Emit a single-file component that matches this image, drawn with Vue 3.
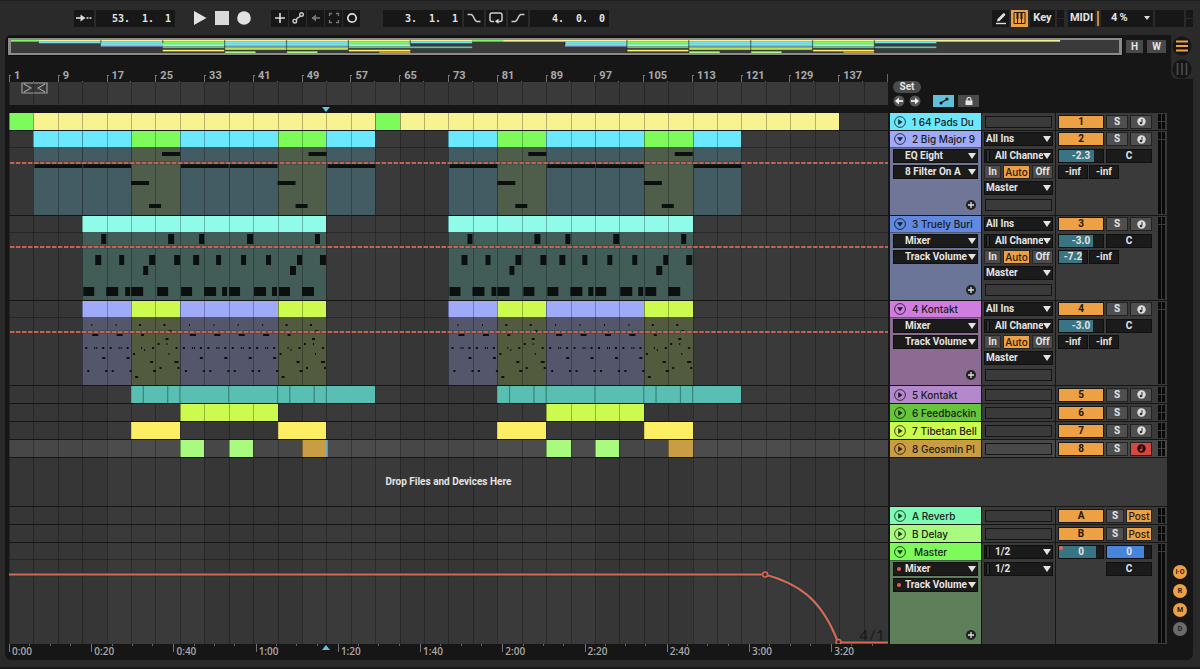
<script setup>
const UNITS = 36

const C = {
  cyan: ['#6be7fe', '#435b62'],
  green: ['#7cfb5b', '#4e5e4a'],
  yellow: ['#f8f391', '#5c5b40'],
  mint: ['#8ffbe8', '#425d57'],
  lav: ['#9fabf9', '#54566b'],
  lime: ['#ccfa4e', '#535b3f'],
  teal: ['#5abfb3', '#385852'],
  gold: ['#feee63', '#5c5b40'],
  pale: ['#a9fb80', '#4e5e4a'],
  brown: ['#c99d43', '#5c4b30']
}

const clips = (...list) => list.map(([from, to, c]) => ({ from, to, head: C[c][0], body: C[c][1], c }))

/* [row y, row height, [[x, width], ...]] measured from the start of the clip group */
const drums = [
  [2, 10, [[19, 5], [86, 6], [117, 5], [165, 6], [233, 5]]],
  [23, 10, [[13, 6], [37, 5], [67, 6], [92, 6], [111, 6], [134, 5], [159, 5], [184, 5], [215, 5], [238, 6]]],
  [34, 9, [[61, 5], [208, 6]]],
  [55, 9, [[1, 11], [24, 12], [43, 5], [49, 12], [75, 11], [99, 11], [122, 12], [140, 5], [147, 11], [172, 12], [190, 5], [197, 11], [220, 12]]]
]
const motifA = [[9, 7, 1], [10, 17, 6], [3, 30, 2], [12, 30, 1], [14, 30, 1], [20, 30, 2], [20, 40, 3], [5, 53, 2], [23, 53, 2]]
const motifB = [[8, 7, 2], [10, 17, 3], [10, 30, 1], [13, 32, 1], [21, 30, 2], [2, 36, 2], [19, 44, 3], [4, 59, 3], [22, 53, 3]]
const motifC = [[8, 7, 2], [13, 13, 3], [10, 21, 3], [2, 26, 2], [11, 26, 1], [20, 30, 2], [13, 36, 1], [19, 44, 4], [4, 50, 2], [22, 50, 2]]

const px = (u) => (u * 880) / UNITS

function drumNotes() {
  return [3, 18].flatMap((s) => drums.flatMap(([y, h, row]) => row.map(([x, w]) => ({ x: px(s) + x, y, w, h }))))
}
function padNotes() {
  const out = []
  for (const s of [1, 3, 7, 9, 13, 18, 22, 24, 28]) out.push({ x: px(s) + 1, y: 17, w: px(2) - 1, h: 4 })
  for (const s of [5, 11, 20, 26]) {
    out.push({ x: px(s), y: 34, w: 18, h: 4 })
    out.push({ x: px(s) + 18, y: 57, w: 12, h: 4 })
    out.push({ x: px(s) + 31, y: 5, w: 18, h: 4 })
  }
  return out
}
function dotNotes() {
  const out = []
  const add = (u, motif) => motif.forEach(([x, y, w]) => out.push({ x: px(u) + x, y, w, h: 2 }))
  for (const s of [3, 18]) {
    ;[0, 1, 4, 5, 6, 7].forEach((o) => add(s + o, motifA))
    ;[2, 8].forEach((o) => { add(s + o, motifB); add(s + o + 1, motifC) })
  }
  return out
}

const tracks = [
  { id: '1', name: '1 64 Pads Du', color: '#6be7fe', clips: clips([0, 1, 'green'], [1, 15, 'yellow'], [15, 16, 'green'], [16, 34, 'yellow']) },
  {
    id: '2', name: '2 Big Major 9', color: '#9fabf9', shade: '#6f7697', open: true, device: 'EQ Eight', param: '8 Filter On A', vol: '-2.3', volFill: 80, peak: '-inf', auto: 16,
    notes: padNotes(),
    clips: clips([1, 3, 'cyan'], [3, 5, 'cyan'], [5, 7, 'green'], [7, 9, 'cyan'], [9, 11, 'cyan'], [11, 13, 'green'], [13, 15, 'cyan'], [18, 20, 'cyan'], [20, 22, 'green'], [22, 24, 'cyan'], [24, 26, 'cyan'], [26, 28, 'green'], [28, 30, 'cyan'])
  },
  {
    id: '3', name: '3 Truely Buri', color: '#6189e0', shade: '#6a7598', open: true, device: 'Mixer', param: 'Track Volume', vol: '-3.0', volFill: 78, peak: '-7.2', peakFill: 82, auto: 15,
    notes: drumNotes(), clips: clips([3, 13, 'mint'], [18, 28, 'mint'])
  },
  {
    id: '4', name: '4 Kontakt', color: '#cf7ee0', shade: '#8c6b92', open: true, device: 'Mixer', param: 'Track Volume', vol: '-3.0', volFill: 78, peak: '-inf', auto: 15,
    notes: dotNotes(),
    clips: clips([3, 5, 'lav'], [5, 7, 'lime'], [7, 11, 'lav'], [11, 13, 'lime'], [18, 20, 'lav'], [20, 22, 'lime'], [22, 26, 'lav'], [26, 28, 'lime'])
  },
  { id: '5', name: '5 Kontakt', color: '#b389cb', cuts: [5.5, 6.5, 7, 9, 11, 11.5, 12.5, 13, 20.5, 21.5, 22, 24, 26, 26.5, 27.5, 28], clips: clips([5, 15, 'teal'], [20, 30, 'teal']) },
  { id: '6', name: '6 Feedbackin', color: '#67c53c', clips: clips([7, 11, 'lime'], [22, 26, 'lime']) },
  { id: '7', name: '7 Tibetan Bell', color: '#ccfa4e', clips: clips([5, 7, 'gold'], [11, 13, 'gold'], [20, 22, 'gold'], [26, 28, 'gold']) },
  { id: '8', name: '8 Geosmin Pl', color: '#c99d43', armed: true, clips: clips([7, 8, 'pale'], [9, 10, 'pale'], [12, 13, 'brown'], [22, 23, 'pale'], [24, 25, 'pale'], [27, 28, 'brown']) }
]
const returns = [
  { id: 'A', name: 'A Reverb', color: '#7bfbb3' },
  { id: 'B', name: 'B Delay', color: '#a9fb80' }
]
const bars = Array.from({ length: 18 }, (_, i) => i * 8 + 1)
const times = Array.from({ length: 11 }, (_, i) => `${Math.floor(i / 3)}:${String((i % 3) * 20).padStart(2, '0')}`)
const views = [['I·O', true], ['R', true], ['M', true], ['D', false]]
const position = ['53.', '1.', '1']
const loopStart = ['3.', '1.', '1']
const loopLength = ['4.', '0.', '0']
</script>

<template>
  <div class="live">
    <header class="transport">
      <div class="group">
        <button class="tool follow" aria-label="Follow">
          <svg viewBox="0 0 16 10" width="16" height="10"><path d="M0 5h8" stroke="#ddd" stroke-width="1.6" /><path d="M4.5 1.5 9.5 5l-5 3.5z" fill="#ddd" /><path d="M10.5 5h2M13.5 5h2" stroke="#ddd" stroke-width="1.4" /></svg>
        </button>
        <div class="counter">
          <input v-for="(v, i) in position" :key="i" :value="v" :aria-label="'Position ' + (i + 1)" />
        </div>
      </div>
      <div class="group play">
        <button aria-label="Play"><svg width="14" height="16" viewBox="0 0 14 16"><path d="M1 1v14l12.500-7z" fill="#e2e2e2" /></svg></button>
        <button aria-label="Stop"><svg width="14" height="14" viewBox="0 0 14 14"><path d="M0 0h14v14H0z" fill="#d9d9d9" /></svg></button>
        <button aria-label="Record"><svg width="14" height="14" viewBox="0 0 14 14"><circle cx="7" cy="7" r="6.800" fill="#e2e2e2" /></svg></button>
      </div>
      <div class="group tools">
        <button class="tool" aria-label="Overdub"><svg width="12" height="12" viewBox="0 0 12 12"><path d="M6 1v10M1 6h10" stroke="#ddd" stroke-width="1.6" /></svg></button>
        <button class="tool" aria-label="Automation arm"><svg width="12" height="12" viewBox="0 0 12 12"><g fill="none" stroke="#ccc" stroke-width="1.4"><circle cx="2.800" cy="9.200" r="1.800" /><circle cx="9.500" cy="2.500" r="1.800" /><path d="M4.300 8.200C5 7.500 4.500 6.500 5.500 6S7.500 5.500 8.300 4" /></g></svg></button>
        <button class="tool" aria-label="Re-enable automation"><svg width="12" height="12" viewBox="0 0 12 12"><path d="M2 6h8" stroke="#777" stroke-width="1.6" /><path d="M6 2.500v7L1.500 6z" fill="#777" /></svg></button>
        <button class="tool" aria-label="Capture"><svg width="12" height="12" viewBox="0 0 12 12"><path d="M1.500 4V1.500H4M8 1.500h2.500V4M10.500 8v2.500H8M4 10.500H1.500V8" fill="none" stroke="#777" stroke-width="1.3" /></svg></button>
        <button class="tool" aria-label="Session record"><svg width="12" height="12" viewBox="0 0 12 12"><circle cx="6" cy="6" r="4.200" fill="none" stroke="#ddd" stroke-width="1.7" /></svg></button>
      </div>
      <div class="group loop">
        <div class="counter">
          <input v-for="(v, i) in loopStart" :key="i" :value="v" :aria-label="'Loop start ' + (i + 1)" />
        </div>
        <button class="tool wide" aria-label="Punch in"><svg width="14" height="10" viewBox="0 0 14 10"><path d="M.500 1.500H4C7 1.500 7 8.500 10 8.500h3.500" fill="none" stroke="#ccc" stroke-width="1.5" /></svg></button>
        <button class="tool wide" aria-label="Loop"><svg width="14" height="12" viewBox="0 0 14 12"><path d="M5 9.500H3A2 2 0 0 1 1 7.500V3a2 2 0 0 1 2-2h8a2 2 0 0 1 2 2v4.500a2 2 0 0 1-2 2H8.500" fill="none" stroke="#ccc" stroke-width="1.5" /><path d="M9.500 6.700v5L5.800 9.300z" fill="#ddd" /></svg></button>
        <button class="tool wide" aria-label="Punch out"><svg width="14" height="10" viewBox="0 0 14 10"><path d="M.500 8.500H4C7 8.500 7 1.500 10 1.500h3.500" fill="none" stroke="#ccc" stroke-width="1.5" /></svg></button>
        <div class="counter">
          <input v-for="(v, i) in loopLength" :key="i" :value="v" :aria-label="'Loop length ' + (i + 1)" />
        </div>
      </div>
      <div class="group status">
        <button class="tool" aria-label="Draw mode"><svg width="14" height="14" viewBox="0 0 14 14"><path d="M2 12.500h10" stroke="#ddd" stroke-width="1.4" /><path d="m3 10.500.500-2.500L9 2.500q.800-.800 1.600 0l.400.400q.800.800 0 1.600L5.500 10z" fill="#ddd" /></svg></button>
        <button class="tool piano" aria-label="Computer MIDI keyboard"><svg width="13" height="12" viewBox="0 0 13 12"><g fill="none" stroke="#2a1c08"><path d="M1 .500h11v11H1z" /><path d="M4.500 6v6M8.500 6v6" /></g><path d="M3.500 1h2v6h-2zM7.500 1h2v6h-2z" fill="#2a1c08" /></svg></button>
        <button class="tool key">Key</button>
        <span class="leds"><i></i><i></i></span>
        <button class="tool midi">MIDI</button>
        <span class="load"></span>
        <button class="tool cpu">4&thinsp;%<svg width="6" height="4" viewBox="0 0 6 4"><path d="M0 0h6L3 4z" fill="#ddd" /></svg></button>
        <span class="tool disk"></span>
        <span class="leds"><i></i><i></i></span>
      </div>
    </header>

    <main class="panel">
      <nav class="rail">
        <button aria-label="Arrangement view"><svg width="20" height="20" viewBox="0 0 20 20"><circle cx="10" cy="10" r="9.500" fill="#161616" /><path d="M4 5.500h12M4 10h12M4 14.500h12" stroke="#eda044" stroke-width="2.200" /></svg></button>
        <button aria-label="Session view"><svg width="20" height="20" viewBox="0 0 20 20"><circle cx="10" cy="10" r="9.500" fill="#161616" /><path d="M5.500 4v12M10 4v12M14.500 4v12" stroke="#4b4b4b" stroke-width="1.700" /></svg></button>
      </nav>

      <div class="overview-row">
        <div class="overview">
          <svg viewBox="0 0 36 8" preserveAspectRatio="none">
            <g v-for="(t, n) in tracks" :key="t.id">
              <rect v-for="(c, i) in t.clips" :key="i" :x="c.from" :y="n" :width="c.to - c.from" height="1" :fill="c.head" />
            </g>
            <path d="M3 0v2M5 0v2M7 0v8M9 0v8M11 0v8M13 0v3M18 1v2M20 0v8M22 0v8M24 0v8M26 0v8M28 0v8" stroke="#1a1a1a" stroke-opacity=".5" stroke-width=".040" />
          </svg>
        </div>
        <button class="mini">H</button>
        <button class="mini w">W</button>
      </div>

      <div class="body">
        <div class="top">
          <div class="time">
            <div class="ruler"><span v-for="b in bars" :key="b">{{ b }}</span></div>
            <div class="scrub grid-bg">
              <svg class="brace" width="27" height="12" viewBox="0 0 27 12"><path d="M1 1h25v10H1zM3 2l7 4-7 4M24 2l-7 4 7 4" fill="none" stroke="#a0a0a0" stroke-width="1.200" /></svg>
            </div>
            <div class="strip"><svg class="head-mark" width="8" height="5" viewBox="0 0 8 5"><path d="M0 0h8L4 5z" fill="#61c3e0" /></svg></div>
          </div>
          <div class="locators">
            <button class="pill">Set</button>
            <div class="loc-row">
              <button class="round" aria-label="Previous locator"><svg width="12" height="12" viewBox="0 0 12 12"><circle cx="6" cy="6" r="5.500" fill="#555" /><path d="M5 6h5" stroke="#eee" stroke-width="1.800" /><path d="M6 2.500v7L2 6z" fill="#eee" /></svg></button>
              <button class="round" aria-label="Next locator"><svg width="12" height="12" viewBox="0 0 12 12"><circle cx="6" cy="6" r="5.500" fill="#555" /><path d="M2 6h5" stroke="#eee" stroke-width="1.800" /><path d="M6 2.500v7L10 6z" fill="#eee" /></svg></button>
              <button class="auto-mode" aria-label="Automation mode"><svg width="10" height="8" viewBox="0 0 10 8"><path d="m2 6 6-4" stroke="#111" stroke-width="1.400" /><circle cx="2" cy="6" r="1.500" fill="#111" /><circle cx="8" cy="2" r="1.500" fill="#111" /></svg></button>
              <button class="lock" aria-label="Lock envelopes"><svg width="8" height="8" viewBox="0 0 8 8"><path d="M.500 3.500h7V8h-7z" fill="#e5e5e5" /><path d="M2 4V2.500a2 2 0 0 1 4 0V4" fill="none" stroke="#e5e5e5" stroke-width="1.200" /></svg></button>
            </div>
          </div>
        </div>

        <section v-for="t in tracks" :key="t.id" class="track" :class="{ open: t.open, armed: t.armed }">
          <div class="lane grid-bg">
            <div v-for="(c, i) in t.clips" :key="i" class="clip" :class="c.c" :style="{ gridColumn: `${c.from + 1} / ${c.to + 1}`, '--head': c.head, '--shade': c.body }"></div>
            <svg v-if="t.open" class="notes" viewBox="0 0 880 68" preserveAspectRatio="none">
              <rect v-for="(n, i) in t.notes" :key="i" :x="n.x" :y="n.y" :width="n.w" :height="n.h" fill="#0b100f" />
              <path :d="`M1 ${t.auto}H880`" stroke="#1e3a38" stroke-width="4" stroke-opacity=".3" />
              <path :d="`M1 ${t.auto}H880`" stroke="#cc5f50" stroke-width="2" stroke-dasharray="4.500 1.500" />
            </svg>
            <svg v-if="t.cuts" class="cuts" viewBox="0 0 36 17" preserveAspectRatio="none"><path v-for="u in t.cuts" :key="u" :d="`M${u} 0V17`" stroke="#3a827a" stroke-width=".050" /></svg>
            <svg v-if="t.armed" class="cuts" viewBox="0 0 36 17" preserveAspectRatio="none"><path d="M13.020 0V17" stroke="#7fd9f5" stroke-width=".050" /></svg>
          </div>

          <div class="name-cell" :style="{ '--color': t.color, '--shade': t.shade || t.color }">
            <div class="name">
              <button class="fold" aria-label="Fold track"><svg width="12" height="12" viewBox="0 0 12 12"><circle cx="6" cy="6" r="5.400" fill="none" stroke="#000" stroke-opacity=".7" /><path v-if="t.open" d="M3 4.200h6L6 8.500z" fill-opacity=".8" /><path v-else d="M4.200 3v6L8.500 6z" fill-opacity=".8" /></svg></button>
              <span>{{ t.name }}</span>
            </div>
            <template v-if="t.open">
              <label class="chooser"><select aria-label="Device"><option>{{ t.device }}</option></select></label>
              <label class="chooser"><select aria-label="Parameter"><option>{{ t.param }}</option></select></label>
              <button class="add" aria-label="Add lane"><svg width="10" height="10" viewBox="0 0 10 10"><circle cx="5" cy="5" r="5" fill="#222" /><path d="M5 2v6M2 5h6" stroke="#ddd" stroke-width="1.300" /></svg></button>
            </template>
          </div>

          <div class="io">
            <template v-if="t.open">
              <label class="chooser"><select aria-label="Input type"><option>All Ins</option></select></label>
              <label class="chooser chan"><select aria-label="Input channel"><option>All Channels</option></select></label>
              <div class="monitor"><button>In</button><button class="on">Auto</button><button>Off</button></div>
              <label class="chooser"><select aria-label="Output"><option>Master</option></select></label>
            </template>
            <div class="blank"></div>
          </div>

          <div class="mixer">
            <div class="cells">
              <div class="line">
                <button class="act">{{ t.id }}</button>
                <button class="sq">S</button>
                <button class="sq" :class="{ rec: t.armed }" aria-label="Arm"><svg width="9" height="9" viewBox="0 0 9 9"><circle cx="4.500" cy="4.500" r="4.200" :fill="t.armed ? '#1c0b0a' : '#ddd'" /><path d="M5 2v3.500" :stroke="t.armed ? '#d8473c' : '#333'" stroke-width="1" /><circle cx="4" cy="6" r="1.300" :fill="t.armed ? '#d8473c' : '#333'" /></svg></button>
              </div>
              <template v-if="t.open">
                <div class="line">
                  <span class="val" :style="{ '--fill': t.volFill + '%' }">{{ t.vol }}</span>
                  <span class="val">C</span>
                </div>
                <div class="line tight">
                  <span class="val short" :style="{ '--fill': (t.peakFill || 0) + '%' }">{{ t.peak }}</span>
                  <span class="val short">-inf</span>
                </div>
              </template>
            </div>
            <div class="meter"><i></i><i></i></div>
          </div>
        </section>

        <section class="track drop">
          <div class="lane grid-bg"><p>Drop Files and Devices Here</p></div>
          <div class="filler"></div>
        </section>

        <section v-for="r in returns" :key="r.id" class="track">
          <div class="lane grid-bg"></div>
          <div class="name-cell" :style="{ '--color': r.color, '--shade': r.color }">
            <div class="name">
              <button class="fold" aria-label="Fold track"><svg width="12" height="12" viewBox="0 0 12 12"><circle cx="6" cy="6" r="5.400" fill="none" stroke="#000" stroke-opacity=".7" /><path d="M4.200 3v6L8.500 6z" fill-opacity=".8" /></svg></button>
              <span>{{ r.name }}</span>
            </div>
          </div>
          <div class="io"><div class="blank"></div></div>
          <div class="mixer">
            <div class="cells">
              <div class="line"><button class="act">{{ r.id }}</button><button class="sq s">S</button><button class="post">Post</button></div>
            </div>
            <div class="meter"><i></i><i></i></div>
          </div>
        </section>

        <section class="track open master">
          <div class="lane grid-bg">
            <svg class="curve" viewBox="0 0 880 101" preserveAspectRatio="none">
              <g fill="none"><path d="M0 31.500H757C788 40 813 54 830 99.500H880" stroke="#183c3b" stroke-width="5" stroke-opacity=".6" /><path d="M0 31.500H757C788 40 813 54 830 99.500H880" stroke="#dd6552" stroke-width="2.200" /></g>
              <g fill="#3a3030" stroke="#dd6552" stroke-width="1.500"><circle cx="757" cy="31.500" r="2.500" /><circle cx="830.500" cy="99" r="2.500" /></g>
            </svg>
            <span class="zoom">4/1</span>
          </div>
          <div class="name-cell" :style="{ '--color': '#7cfb5b', '--shade': '#5d7f59' }">
            <div class="name">
              <button class="fold" aria-label="Fold track"><svg width="12" height="12" viewBox="0 0 12 12"><circle cx="6" cy="6" r="5.400" fill="none" stroke="#000" stroke-opacity=".7" /><path d="M3 4.200h6L6 8.500z" fill-opacity=".8" /></svg></button>
              <span class="inset">Master</span>
            </div>
            <label class="chooser dot"><select aria-label="Device"><option>Mixer</option></select></label>
            <label class="chooser dot"><select aria-label="Parameter"><option>Track Volume</option></select></label>
            <button class="add" aria-label="Add lane"><svg width="10" height="10" viewBox="0 0 10 10"><circle cx="5" cy="5" r="5" fill="#222" /><path d="M5 2v6M2 5h6" stroke="#ddd" stroke-width="1.300" /></svg></button>
          </div>
          <div class="io">
            <label class="chooser chan"><select aria-label="Cue out"><option>1/2</option></select></label>
            <label class="chooser chan"><select aria-label="Master out"><option>1/2</option></select></label>
          </div>
          <div class="mixer">
            <div class="cells">
              <div class="line"><span class="val automated" :style="{ '--fill': '84%' }">0</span><span class="val cue" :style="{ '--fill': '84%' }">0</span></div>
              <div class="line end"><span class="val">C</span></div>
            </div>
            <div class="meter"><i></i><i></i></div>
          </div>
          <div class="views">
            <button v-for="[v, on] in views" :key="v" :class="{ on }">{{ v }}</button>
          </div>
        </section>

        <footer class="seconds">
          <div class="scale"><span v-for="s in times" :key="s">{{ s }}</span>
            <svg class="foot-mark" width="8" height="5" viewBox="0 0 8 5"><path d="M0 5h8L4 0z" fill="#61c3e0" /></svg>
          </div>
        </footer>
      </div>
    </main>
  </div>
</template>

<style>
body { background: #2a2a2a; }
</style>

<style scoped>
* { box-sizing: border-box; }
.live {
  min-height: 100vh;
  display: flex;
  flex-direction: column;
  background: #2a2a2a;
  font: 700 10px/12px Roboto, "Liberation Sans", sans-serif;
  color: #e4e4e4;
  overflow: hidden;
  border-bottom: 2px solid #181818;
}
button, select, input { font: inherit; color: inherit; border: 0; margin: 0; padding: 0; background: none; }
button { display: flex; align-items: center; justify-content: center; }
svg { display: block; }

/* transport */
.transport { height: 35px; display: flex; align-items: center; padding: 0 7px 0 74px; border-top: 1px solid #1f1f1f; }
.group { display: flex; align-items: center; gap: 2px; }
.tool { height: 17px; width: 17px; background: #171717; flex: none; }
.follow { width: 20px; }
.counter { display: flex; width: 79px; height: 17px; padding-right: 4px; background: #171717; justify-content: flex-end; }
.counter input { width: 24px; height: 17px; text-align: right; font: 700 10px/17px "DejaVu Sans Mono", monospace; }
.counter input:last-child { width: 17px; }
.play { margin-left: 18px; gap: 8px; }
.tools { margin-left: 20px; gap: 1px; }
.loop { margin-left: 23px; }
.wide { width: 20px; }
.status { margin-left: auto; }
.piano { background: #eda044; }
.key { width: 25px; font-size: 11px; }
.midi { width: 27px; font-size: 11px; }
.leds { display: grid; gap: 1px; margin-right: 2px; }
.leds:last-child { margin: 0; }
.leds i { width: 7px; height: 8px; background: #171717; }
.load { width: 2px; height: 15px; background: #c9853a; }
.cpu { width: 52px; font-size: 11px; justify-content: space-between; padding: 0 3px 0 10px; }
.disk { width: 29px; }

/* panel */
.panel { position: relative; flex: 1; margin: 0 7px 7px 5px; background: #161616; border-radius: 6px; }
.rail { position: absolute; top: 0; right: 0; width: 22px; height: 44px; background: #2a2a2a; border-bottom-left-radius: 6px; display: grid; justify-content: center; gap: 2px; }
.overview-row { display: flex; align-items: center; gap: 4px; padding: 3px 27px 0 3px; }
.overview { position: relative; flex: 1; height: 17px; padding: 2px 0; background: #3a3a3a; }
.overview svg { width: 100%; height: 13px; }
.overview::after { content: ""; position: absolute; inset: 0; border: solid #8b8b8b; border-width: 2px 3px; outline: 1px solid #0c0c0c; }
.mini { width: 17px; height: 13px; background: #494949; }
.mini.w { width: 19px; }

.body { padding: 0 26px 0 4px; }
.top { display: flex; gap: 2px; }
.time { flex: 1; }
.ruler { height: 27px; display: grid; grid-template-columns: repeat(18, 1fr); align-items: end; border-right: 1px solid #666; border-image: linear-gradient(transparent 70%, #666 70%) 1; font-size: 11px; }
.ruler span { height: 12px; padding-left: 5px; color: #a9a9a9; background: linear-gradient(#777, #777) 0 6px / 1px 6px no-repeat, linear-gradient(#777, #777) 0 5px / 2px 1px no-repeat, linear-gradient(#666, #666) 50% 11px / 1px 1px no-repeat; }
.grid-bg {
  --step: calc(100% / 36);
  position: relative;
  background: repeating-linear-gradient(to right, #363636 0 calc(100% / 9), #3a3a3a 0 calc(200% / 9));
}
.grid-bg::after {
  content: "";
  position: absolute;
  inset: 0;
  pointer-events: none;
  background: repeating-linear-gradient(to right, rgba(0, 0, 0, .27) 0 1px, transparent 1px var(--step));
}
.scrub { height: 23px; }
.brace { margin-left: 12px; }
.strip { height: 8px; display: flex; }
.head-mark { margin: 2px 0 0 calc(100% * 13 / 36 - 4px); }
.locators { width: 277px; padding: 26px 0 0 3px; }
.pill { width: 28px; height: 12px; border-radius: 6px; background: #4b4b4b; }
.loc-row { display: flex; align-items: center; gap: 4px; margin-top: 2px; }
.auto-mode, .lock { width: 21px; height: 12px; background: #4b4b4b; }
.auto-mode { margin-left: 8px; background: #61bfdc; }

/* tracks */
.track { position: relative; display: grid; grid-template-columns: minmax(0, 1fr) 91px 73px 111px; column-gap: 1px; height: 17px; margin-bottom: 1px; }
.track > .lane { margin-right: 1px; }
.track.open { height: 84px; }
.lane { display: grid; grid-template: 100% / repeat(36, 1fr); }
.open > .lane { background-image: linear-gradient(rgba(0, 0, 0, .3), rgba(0, 0, 0, .3)), repeating-linear-gradient(to right, #363636 0 calc(100% / 9), #3a3a3a 0 calc(200% / 9)); background-size: 100% 1px, auto; background-position: 0 16px, 0 0; background-repeat: no-repeat, repeat; }
.clip { grid-row: 1; background: var(--head); box-shadow: inset 1px 0 rgba(0, 0, 0, .15); }
.teal, .gold { z-index: 1; }
.open .clip { background: linear-gradient(var(--head) 16px, var(--shade) 16px); }
.notes { grid-area: 1 / 1 / 2 / -1; width: 100%; height: 68px; margin-top: 16px; z-index: 1; }
.cuts { grid-area: 1 / 1 / 2 / -1; width: 100%; height: 17px; z-index: 2; }
.armed > .lane { background: repeating-linear-gradient(to right, #474747 0 calc(100% / 9), #4c4c4c 0 calc(200% / 9)); }
.armed > .io, .armed > .mixer { background: #494949; }

.name-cell { display: grid; grid-auto-rows: 1fr; background: var(--shade); align-items: center; }
.io, .mixer { background: #3a3a3a; }
.io { padding: 0 3px; display: grid; align-items: center; }
.open > .name-cell, .open > .io, .open .cells { grid-template-rows: repeat(5, 1fr); height: 84px; padding-bottom: 2px; }
.name { display: flex; align-items: center; gap: 6px; height: 100%; min-height: 16px; padding-left: 4px; background: var(--color); color: #1b1b1b; font-family: Inter, sans-serif; font-weight: 500; white-space: nowrap; overflow: hidden; }
.inset { padding-left: 2px; }
.open .name { box-shadow: 0 1px rgba(0, 0, 0, .25); }
.fold { flex: none; }
.chooser { position: relative; display: block; height: 12px; background: #1b1b1b; outline: 1px solid #101010; }
.chooser select { appearance: none; display: block; width: calc(100% - 9px); height: 12px; line-height: 12px; padding-left: 1px; overflow: hidden; text-overflow: clip; white-space: nowrap; outline: 0; }
.chooser::after { content: ""; position: absolute; right: 1px; top: 3px; border: solid transparent; border-width: 6px 4px 0; border-top-color: #e4e4e4; }
.name-cell .chooser { margin: 0 4px; }
.name-cell .chooser select { padding-left: 11px; }
.chooser.dot::before { content: ""; position: absolute; left: 3px; top: 4px; width: 4px; height: 4px; border-radius: 2px; background: #e0604f; }
.chooser.chan select { padding-left: 10px; }
.chooser.chan::before { content: ""; position: absolute; left: 1px; top: 1px; width: 4px; height: 10px; background: repeating-linear-gradient(to right, #080808 0 1px, #333 1px 3px); }
.add { grid-row: 5; justify-self: end; margin-right: 5px; }
.monitor { display: flex; justify-content: space-between; }
.monitor button { width: 15px; height: 12px; background: #4b4b4b; outline: 1px solid #262626; }
.monitor button:last-child { width: 19px; }
.monitor button.on { width: 25px; background: #eda044; color: #2b1a05; font-family: Inter, sans-serif; font-weight: 500; }
.blank { height: 12px; border: 1px solid #141414; grid-row: -2; }

.mixer { display: flex; padding-left: 3px; }
.cells { display: grid; grid-template-rows: 1fr; align-items: center; width: 92px; flex: none; }
.line { display: flex; justify-content: space-between; }
.line.tight { justify-content: flex-start; gap: 3px; }
.line.end { justify-content: flex-end; }
.act { width: 44px; height: 12px; background: #eda044; color: #241605; outline: 1px solid #161616; }
.sq { width: 20px; height: 12px; background: #4f4f4f; outline: 1px solid #222; }
.sq.s { width: 16px; }
.sq.rec { background: #d8473c; }
.post { width: 24px; height: 12px; background: #eda044; color: #2b1a05; font-family: Inter, sans-serif; font-weight: 500; outline: 1px solid #222; }
.val { position: relative; width: 44px; height: 12px; text-align: center; outline: 1px solid #101010; background: linear-gradient(to right, #397482 var(--fill, 0%), #1b1b1b var(--fill, 0%)); }
.val.short { width: 28px; }
.val.cue { background: linear-gradient(to right, #4685d9 var(--fill), #1b1b1b var(--fill)); }
.automated::before { content: ""; position: absolute; left: 0; top: 0; width: 4px; height: 4px; border-radius: 2px; background: #ef6450; }
.meter { display: flex; gap: 1px; margin-left: 7px; padding: 1px 0; }
.meter i { width: 3px; background: linear-gradient(#0a0a0a 7px, #3a3a3a 7px 8px, #0a0a0a 8px); }

.drop { height: 48px; grid-template-columns: minmax(0, 1fr) 277px; }
.lane p { grid-area: 1 / 1 / 2 / -1; margin: 0; align-self: center; text-align: center; z-index: 1; }
.filler { background: #3a3a3a; }

.track.master { height: 101px; margin: 0; }
.curve { grid-area: 1 / 1 / 2 / -1; width: 100%; height: 101px; z-index: 1; }
.zoom { position: absolute; right: 3px; bottom: 0; font: 500 16px/18px Lato, sans-serif; color: #1c1c1c; }
.master > .name-cell { height: 101px; padding: 0; grid-template-rows: 17px 17px 16px 1fr 18px; }
.master > .io, .master .cells { height: 101px; padding-bottom: 0; grid-template-rows: 17px 17px 1fr; }
.views { position: absolute; left: calc(100% + 6px); bottom: 8px; display: grid; gap: 5px; }
.views button { width: 14px; height: 14px; border-radius: 7px; background: #6b6b6b; color: #222; font-size: 7px; line-height: 8px; }
.views .on { background: #eda044; }

.seconds { display: grid; grid-template-columns: minmax(0, 1fr) 277px; column-gap: 2px; height: 16px; }
.scale { position: relative; display: flex; overflow: hidden; }
.scale span { flex: 0 0 9.355%; padding: 1px 0 0 3px; color: #a9a9a9; font: 600 10px/12px "Open Sans", sans-serif; background: linear-gradient(#777, #777) 0 0 / 1px 8px no-repeat, linear-gradient(#666, #666) 25% 0 / 1px 2px no-repeat, linear-gradient(#666, #666) 50% 0 / 1px 2px no-repeat, linear-gradient(#666, #666) 75% 0 / 1px 2px no-repeat; }
.foot-mark { position: absolute; top: 1px; left: calc(100% * 13 / 36 - 4px); }
</style>
